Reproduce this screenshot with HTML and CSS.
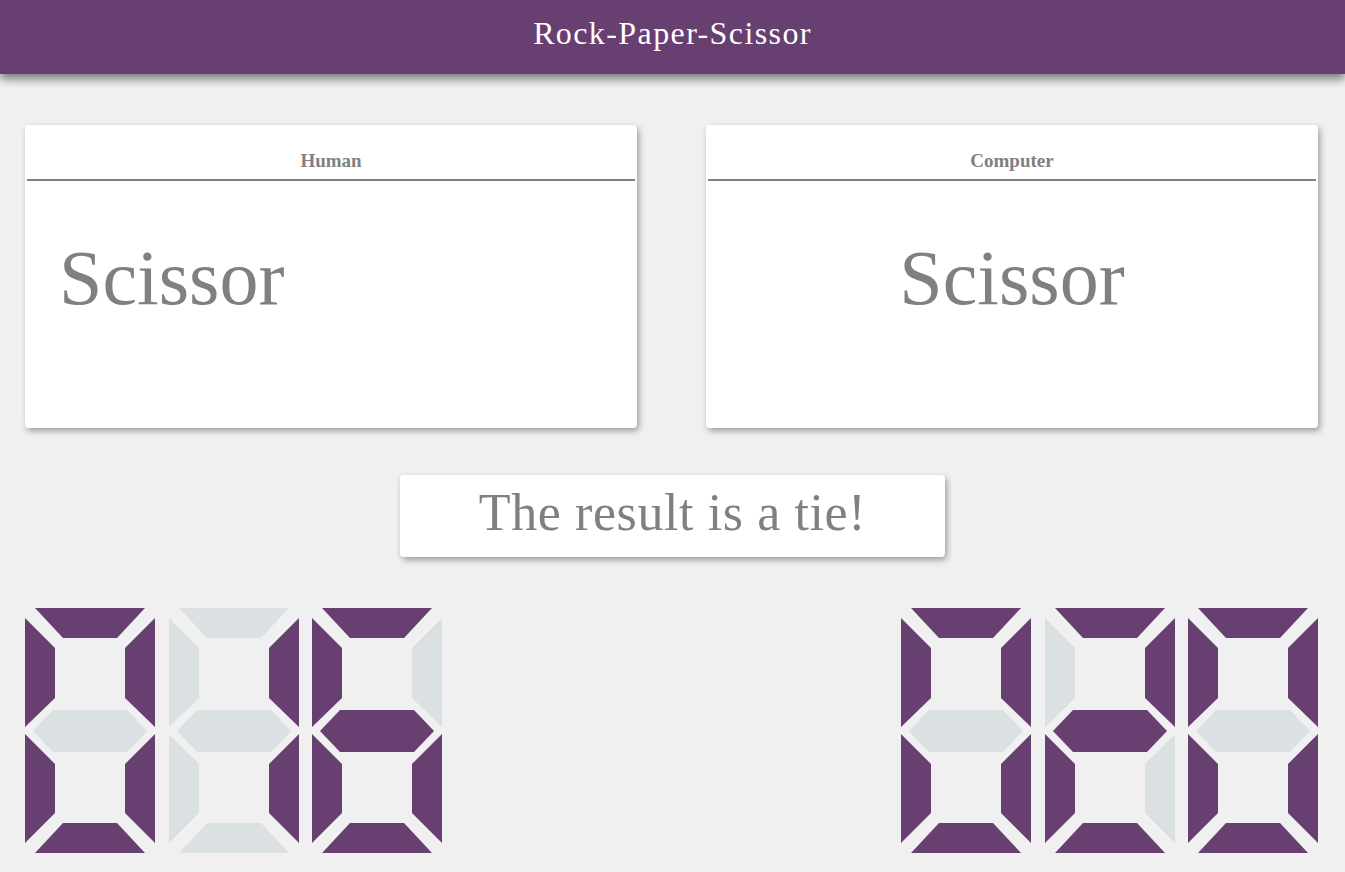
FILE: index.html
```html
<!DOCTYPE html>
<html>
<head>
<meta charset="utf-8">
<title>Rock-Paper-Scissor</title>
<link rel="stylesheet" href="styles.css">
</head>
<body>
<header class="topbar">Rock-Paper-Scissor</header>
<main class="game">
  <section class="players">
    <div class="card">
      <div class="card-title">Human</div>
      <div class="card-body card-body-left">Scissor</div>
    </div>
    <div class="card">
      <div class="card-title">Computer</div>
      <div class="card-body card-body-center">Scissor</div>
    </div>
  </section>
  <div class="result-row">
    <div class="result">The result is a tie!</div>
  </div>
  <section class="scores">
    <div class="display">
      <!-- 0 -->
      <svg class="digit" viewBox="0 0 130 245" width="130" height="245">
        <polygon class="on" points="10,0 120,0 92,30 38,30"/>
        <polygon class="on" points="0,10 30,40 30,90 0,119"/>
        <polygon class="on" points="130,10 100,40 100,90 130,119"/>
        <polygon class="off" points="8,123 28,102 102,102 122,123 102,144 28,144"/>
        <polygon class="on" points="0,126 30,156 30,205 0,235"/>
        <polygon class="on" points="130,126 100,156 100,205 130,235"/>
        <polygon class="on" points="10,245 120,245 92,215 38,215"/>
      </svg>
      <!-- 1 -->
      <svg class="digit" viewBox="0 0 130 245" width="130" height="245">
        <polygon class="off" points="10,0 120,0 92,30 38,30"/>
        <polygon class="off" points="0,10 30,40 30,90 0,119"/>
        <polygon class="on" points="130,10 100,40 100,90 130,119"/>
        <polygon class="off" points="8,123 28,102 102,102 122,123 102,144 28,144"/>
        <polygon class="off" points="0,126 30,156 30,205 0,235"/>
        <polygon class="on" points="130,126 100,156 100,205 130,235"/>
        <polygon class="off" points="10,245 120,245 92,215 38,215"/>
      </svg>
      <!-- 6 -->
      <svg class="digit" viewBox="0 0 130 245" width="130" height="245">
        <polygon class="on" points="10,0 120,0 92,30 38,30"/>
        <polygon class="on" points="0,10 30,40 30,90 0,119"/>
        <polygon class="off" points="130,10 100,40 100,90 130,119"/>
        <polygon class="on" points="8,123 28,102 102,102 122,123 102,144 28,144"/>
        <polygon class="on" points="0,126 30,156 30,205 0,235"/>
        <polygon class="on" points="130,126 100,156 100,205 130,235"/>
        <polygon class="on" points="10,245 120,245 92,215 38,215"/>
      </svg>
    </div>
    <div class="display">
      <!-- 0 -->
      <svg class="digit" viewBox="0 0 130 245" width="130" height="245">
        <polygon class="on" points="10,0 120,0 92,30 38,30"/>
        <polygon class="on" points="0,10 30,40 30,90 0,119"/>
        <polygon class="on" points="130,10 100,40 100,90 130,119"/>
        <polygon class="off" points="8,123 28,102 102,102 122,123 102,144 28,144"/>
        <polygon class="on" points="0,126 30,156 30,205 0,235"/>
        <polygon class="on" points="130,126 100,156 100,205 130,235"/>
        <polygon class="on" points="10,245 120,245 92,215 38,215"/>
      </svg>
      <!-- 2 -->
      <svg class="digit" viewBox="0 0 130 245" width="130" height="245">
        <polygon class="on" points="10,0 120,0 92,30 38,30"/>
        <polygon class="off" points="0,10 30,40 30,90 0,119"/>
        <polygon class="on" points="130,10 100,40 100,90 130,119"/>
        <polygon class="on" points="8,123 28,102 102,102 122,123 102,144 28,144"/>
        <polygon class="on" points="0,126 30,156 30,205 0,235"/>
        <polygon class="off" points="130,126 100,156 100,205 130,235"/>
        <polygon class="on" points="10,245 120,245 92,215 38,215"/>
      </svg>
      <!-- 0 -->
      <svg class="digit" viewBox="0 0 130 245" width="130" height="245">
        <polygon class="on" points="10,0 120,0 92,30 38,30"/>
        <polygon class="on" points="0,10 30,40 30,90 0,119"/>
        <polygon class="on" points="130,10 100,40 100,90 130,119"/>
        <polygon class="off" points="8,123 28,102 102,102 122,123 102,144 28,144"/>
        <polygon class="on" points="0,126 30,156 30,205 0,235"/>
        <polygon class="on" points="130,126 100,156 100,205 130,235"/>
        <polygon class="on" points="10,245 120,245 92,215 38,215"/>
      </svg>
    </div>
  </section>
</main>
</body>
</html>
```

FILE: styles.css
```css
* { box-sizing: border-box; }

html, body {
  margin: 0;
  padding: 0;
  background: #f0f0f0;
  font-family: "Liberation Serif", "DejaVu Serif", serif;
  overflow: hidden;
}

.topbar {
  height: 74px;
  background: #673f71;
  color: #ffffff;
  font-size: 32px;
  letter-spacing: 1.4px;
  line-height: 66px;
  text-align: center;
  box-shadow: 0 5px 9px rgba(0, 0, 0, 0.5);
  position: relative;
  z-index: 1;
}

.game {
  padding: 51px 27px 0 25px;
}

.players {
  display: grid;
  grid-template-columns: 1fr 1fr;
  column-gap: 69px;
}

.card {
  background: #ffffff;
  height: 303px;
  border-radius: 4px;
  box-shadow: 2px 3px 6px rgba(0, 0, 0, 0.35);
  padding: 0 2px;
}

.card-title {
  height: 56px;
  border-bottom: 2px solid #808080;
  color: #808080;
  font-weight: bold;
  font-size: 19px;
  text-align: center;
  padding-top: 24px;
  line-height: 24px;
}

.card-body {
  color: #808080;
  font-size: 78px;
  line-height: 80px;
  padding-top: 57px;
}

.card-body-left {
  padding-left: 32px;
}

.card-body-center {
  text-align: center;
}

.result-row {
  display: flex;
  justify-content: center;
  margin-top: 47px;
  padding-left: 2px;
}

.result {
  width: 545px;
  height: 82px;
  background: #ffffff;
  border-radius: 4px;
  box-shadow: 2px 3px 6px rgba(0, 0, 0, 0.35);
  color: #808080;
  font-size: 52px;
  letter-spacing: 0.6px;
  line-height: 76px;
  text-align: center;
}

.scores {
  display: flex;
  justify-content: space-between;
  margin-top: 51px;
}

.display {
  display: flex;
  gap: 13.5px;
}

.digit {
  display: block;
}

.digit .on { fill: #673f71; }
.digit .off { fill: #dbe0e2; }
```
